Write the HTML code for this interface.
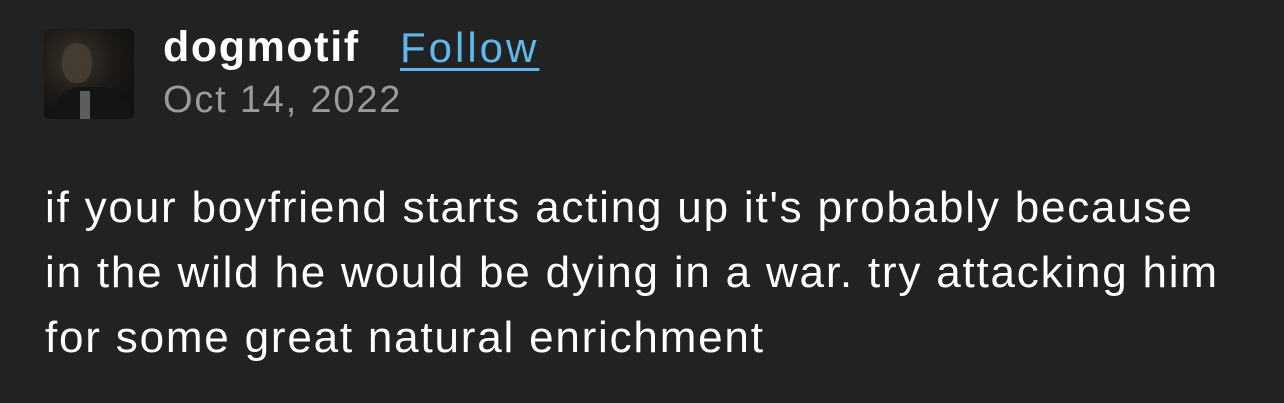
<!DOCTYPE html>
<html><head><style>
html,body{margin:0;padding:0;background:#222222;width:1284px;height:403px;overflow:hidden;font-family:"Liberation Sans",sans-serif;}
.av{position:absolute;left:44px;top:29px;width:90px;height:90px;border-radius:6px;background:radial-gradient(ellipse at 35% 35%,#3a342c 0%,#1e1a16 45%,#111 80%);overflow:hidden}
.av .face{position:absolute;left:18px;top:14px;width:30px;height:40px;border-radius:45%;background:#4a4036;opacity:.8}
.av .suit{position:absolute;left:8px;top:58px;width:80px;height:40px;border-radius:30px 30px 0 0;background:#141414}
.av .shirt{position:absolute;left:36px;top:62px;width:10px;height:30px;background:#8a8f88;opacity:.6}
.name{position:absolute;left:163px;top:23px;font-size:43px;letter-spacing:1.6px;font-weight:bold;color:#fff}
.follow{position:absolute;left:400px;top:24px;font-size:42px;letter-spacing:3px;color:#5fb7ea;text-decoration:underline;text-underline-offset:6px;text-decoration-thickness:3px}
.date{position:absolute;left:163px;top:79px;font-size:38px;letter-spacing:1.8px;color:#9a9a9a}
.body{position:absolute;left:45px;top:175px;font-size:44px;letter-spacing:1.8px;line-height:65px;color:#fff;white-space:nowrap}
</style></head><body>
<div class="av"><div class="face"></div><div class="suit"></div><div class="shirt"></div></div>
<div class="name">dogmotif</div>
<div class="follow">Follow</div>
<div class="date">Oct 14, 2022</div>
<div class="body">if your boyfriend starts acting up it's probably because<br>in the wild he would be dying in a war. try attacking him<br>for some great natural enrichment</div>
</body></html>
